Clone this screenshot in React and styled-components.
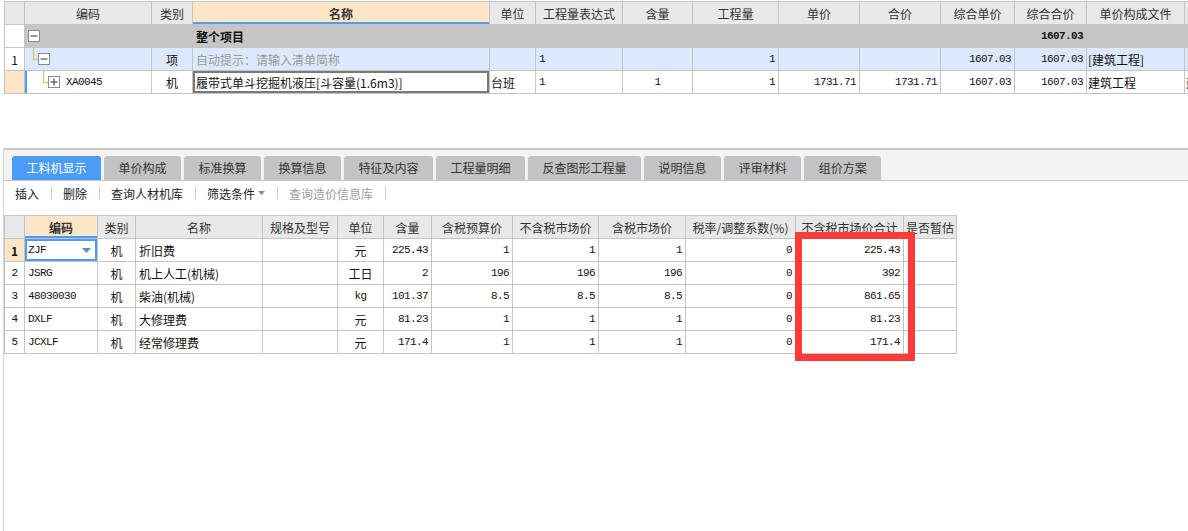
import React from "react";
import styled, { createGlobalStyle } from "styled-components";

const GlobalStyle = createGlobalStyle`
  html, body { margin: 0; padding: 0; background: #ffffff; }
  body {
    font-family: "Noto Sans CJK SC", "Noto Sans", sans-serif;
    font-size: 12px;
    color: #111;
  }
  * { box-sizing: border-box; }
`;

const LINE = "#c4c4c4";
const BLUE = "#4a9cf7";
const PEACH = "#fde6c8";

const Page = styled.div`
  position: relative;
  width: 1188px;
  height: 531px;
  overflow: hidden;
  background: #fff;
`;

/* ---------- upper grid ---------- */
const TopPanel = styled.div`
  height: 148px;
  padding: 1px 0 0 4px;
  overflow: hidden;
`;

const Grid = styled.div`
  display: flex;
  flex-direction: column;
  width: max-content;
  border-top: 1px solid ${LINE};
  border-left: 1px solid ${LINE};
`;

const Row = styled.div`
  display: grid;
  grid-template-columns: ${(p) => p.$cols};
  height: 23px;
  background: ${(p) => p.$bg || "#fff"};
`;

const Cell = styled.div`
  position: relative;
  display: flex;
  align-items: center;
  justify-content: ${(p) =>
    p.$align === "right" ? "flex-end" : p.$align === "center" ? "center" : "flex-start"};
  padding: ${(p) => (p.$tight ? "0 1px" : "0 3px")};
  border-right: 1px solid ${LINE};
  border-bottom: 1px solid ${LINE};
  background: ${(p) => p.$bg || "transparent"};
  color: ${(p) => p.$muted ? "#9a9a9a" : "#111"};
  font-weight: ${(p) => (p.$bold ? 700 : 400)};
  white-space: nowrap;
  overflow: hidden;
  ${(p) =>
    p.$mono &&
    `font-family: "Liberation Mono", "Noto Sans CJK SC", monospace;
     font-size: 11px;
     letter-spacing: -0.6px;`}
  ${(p) => p.$marker && `box-shadow: inset 2px 0 0 ${BLUE};`}
  ${(p) => p.$editing && `box-shadow: inset 0 0 0 2px #7a7a7a;`}
  ${(p) => p.$selected && `box-shadow: inset 0 0 0 2px ${BLUE};`}
`;

const Head = styled.div`
  display: flex;
  align-items: center;
  justify-content: center;
  border-right: 1px solid ${LINE};
  border-bottom: 1px solid ${LINE};
  background: ${(p) => (p.$active ? PEACH : "#e8e8e8")};
  color: #333;
  font-weight: ${(p) => (p.$active ? 700 : 400)};
  white-space: nowrap;
  overflow: hidden;
  ${(p) => p.$active && `box-shadow: inset 0 -2px 0 ${BLUE};`}
`;

const Toggle = styled.span`
  flex: none;
  width: 12px;
  height: 12px;
  margin-left: ${(p) => p.$indent || 0}px;
  border: 1px solid #8c8c8c;
  background: #fff;
  display: flex;
  align-items: center;
  justify-content: center;
`;

const Connector = styled.span`
  flex: none;
  align-self: flex-start;
  width: 5px;
  height: 12px;
  margin-left: ${(p) => p.$indent}px;
  border-left: 1px solid #f3b25a;
  border-bottom: 1px solid #f3b25a;
`;

const Code = styled.span`
  margin-left: 6px;
  font-family: "Liberation Mono", monospace;
  font-size: 11px;
  letter-spacing: -0.6px;
`;

function ToggleBox({ open, indent }) {
  return (
    <Toggle $indent={indent}>
      <svg width="10" height="10" viewBox="0 0 10 10">
        <line x1="1.5" y1="5" x2="8.5" y2="5" stroke="#333" strokeWidth="1" />
        {!open && <line x1="5" y1="1.5" x2="5" y2="8.5" stroke="#333" strokeWidth="1" />}
      </svg>
    </Toggle>
  );
}

const topCols = [20, 127, 41, 297, 46, 87, 70, 86, 81, 81, 74, 72, 98, 80]
  .map((w) => `${w}px`)
  .join(" ");

const topHeads = [
  "", "编码", "类别", "名称", "单位", "工程量表达式", "含量", "工程量",
  "单价", "合价", "综合单价", "综合合价", "单价构成文件", "",
];

/* ---------- lower panel ---------- */
const BottomPanel = styled.div`
  margin-left: 3px;
  height: 383px;
  border-left: 1px solid #d6d6d6;
  border-top: 2px solid #c6c6c6;
`;

const TabBar = styled.div`
  display: flex;
  align-items: flex-end;
  gap: 3px;
  height: 31px;
  padding: 6px 0 0 8px;
  background: #f3f3f3;
  border-bottom: 1px solid #c8c8c8;
`;

const Tab = styled.div`
  height: 24px;
  line-height: 24px;
  padding: 0 14.5px;
  border-radius: 3px 3px 0 0;
  background: ${(p) => (p.$active ? BLUE : "#c3c3c3")};
  color: ${(p) => (p.$active ? "#fff" : "#333")};
  font-size: 12px;
  white-space: nowrap;
`;

const Toolbar = styled.div`
  display: flex;
  align-items: center;
  height: 24px;
  padding-left: 11px;
`;

const ToolItem = styled.span`
  display: flex;
  align-items: center;
  gap: 3px;
  color: ${(p) => (p.$disabled ? "#9d9d9d" : "#222")};
`;

const Sep = styled.span`
  width: 1px;
  height: 14px;
  margin: 0 11px 0 12px;
  background: #d0d0d0;
`;

const LowerGridWrap = styled.div`
  margin-top: 10px;
`;

const Caret = styled.svg`
  position: absolute;
  right: 6px;
  top: 9px;
`;

const Highlight = styled.div`
  position: absolute;
  left: 795px;
  top: 232px;
  width: 120px;
  height: 129px;
  border: 7px solid #fe3b3b;
  pointer-events: none;
`;

const lowCols = [20, 73, 38, 127, 75, 46, 48, 81, 86, 87, 110, 108, 53]
  .map((w) => `${w}px`)
  .join(" ");

const lowHeads = [
  "", "编码", "类别", "名称", "规格及型号", "单位", "含量", "含税预算价",
  "不含税市场价", "含税市场价", "税率/调整系数(%)", "不含税市场价合计", "是否暂估",
];

const items = [
  { n: "1", code: "ZJF", name: "折旧费", unit: "元", qty: "225.43", a: "1", b: "1", c: "1", total: "225.43" },
  { n: "2", code: "JSRG", name: "机上人工(机械)", unit: "工日", qty: "2", a: "196", b: "196", c: "196", total: "392" },
  { n: "3", code: "48030030", name: "柴油(机械)", unit: "kg", qty: "101.37", a: "8.5", b: "8.5", c: "8.5", total: "861.65" },
  { n: "4", code: "DXLF", name: "大修理费", unit: "元", qty: "81.23", a: "1", b: "1", c: "1", total: "81.23" },
  { n: "5", code: "JCXLF", name: "经常修理费", unit: "元", qty: "171.4", a: "1", b: "1", c: "1", total: "171.4" },
];

const tabs = [
  "工料机显示", "单价构成", "标准换算", "换算信息", "特征及内容",
  "工程量明细", "反查图形工程量", "说明信息", "评审材料", "组价方案",
];

export default function App() {
  return (
    <Page>
      <GlobalStyle />
      <TopPanel>
        <Grid>
          <Row $cols={topCols}>
            {topHeads.map((h, i) => (
              <Head key={i} $active={h === "名称"}>{h}</Head>
            ))}
          </Row>

          <Row $cols={topCols} $bg="#c6c6c6">
            <Cell $bg="#fff" />
            <Cell $tight>
              <ToggleBox open indent={2} />
            </Cell>
            <Cell />
            <Cell $bold>整个项目</Cell>
            <Cell />
            <Cell />
            <Cell />
            <Cell />
            <Cell />
            <Cell />
            <Cell />
            <Cell $mono $bold $align="right">1607.03</Cell>
            <Cell />
            <Cell />
          </Row>

          <Row $cols={topCols} $bg="#dce8fb">
            <Cell $bg="#fff" $align="center">1</Cell>
            <Cell $tight>
              <Connector $indent={7} />
              <ToggleBox open />
            </Cell>
            <Cell $align="center">项</Cell>
            <Cell $muted>自动提示：请输入清单简称</Cell>
            <Cell />
            <Cell $mono>1</Cell>
            <Cell />
            <Cell $mono $align="right">1</Cell>
            <Cell />
            <Cell />
            <Cell $mono $align="right">1607.03</Cell>
            <Cell $mono $align="right">1607.03</Cell>
            <Cell $tight>[建筑工程]</Cell>
            <Cell />
          </Row>

          <Row $cols={topCols}>
            <Cell $bg={PEACH} />
            <Cell $tight $marker>
              <Connector $indent={17} />
              <ToggleBox />
              <Code>XA0045</Code>
            </Cell>
            <Cell $align="center">机</Cell>
            <Cell $editing>履带式单斗挖掘机液压[斗容量(1.6m3)]</Cell>
            <Cell $tight>台班</Cell>
            <Cell $mono>1</Cell>
            <Cell $mono $align="center">1</Cell>
            <Cell $mono $align="right">1</Cell>
            <Cell $mono $align="right">1731.71</Cell>
            <Cell $mono $align="right">1731.71</Cell>
            <Cell $mono $align="right">1607.03</Cell>
            <Cell $mono $align="right">1607.03</Cell>
            <Cell $tight>建筑工程</Cell>
            <Cell $tight>建筑工程</Cell>
          </Row>
        </Grid>
      </TopPanel>

      <BottomPanel>
        <TabBar>
          {tabs.map((t, i) => (
            <Tab key={t} $active={i === 0}>{t}</Tab>
          ))}
        </TabBar>

        <Toolbar>
          <ToolItem>插入</ToolItem>
          <Sep />
          <ToolItem>删除</ToolItem>
          <Sep />
          <ToolItem>查询人材机库</ToolItem>
          <Sep />
          <ToolItem>
            筛选条件
            <svg width="7" height="4" viewBox="0 0 7 4">
              <polygon points="0,0 7,0 3.5,4" fill="#8a8a8a" />
            </svg>
          </ToolItem>
          <Sep />
          <ToolItem $disabled>查询造价信息库</ToolItem>
          <Sep />
        </Toolbar>

        <LowerGridWrap>
          <Grid>
            <Row $cols={lowCols}>
              {lowHeads.map((h, i) => (
                <Head key={i} $active={h === "编码"}>{h}</Head>
              ))}
            </Row>
            {items.map((it, i) => (
              <Row key={it.n} $cols={lowCols}>
                <Cell
                  $align="center"
                  $bg={i === 0 ? PEACH : "#fff"}
                  $bold={i === 0}
                  $mono={i !== 0}
                >
                  {it.n}
                </Cell>
                <Cell $mono $selected={i === 0}>
                  {it.code}
                  {i === 0 && (
                    <Caret width="9" height="5" viewBox="0 0 9 5">
                      <polygon points="0,0 9,0 4.5,5" fill="#5a8fc8" />
                    </Caret>
                  )}
                </Cell>
                <Cell $align="center">机</Cell>
                <Cell>{it.name}</Cell>
                <Cell />
                <Cell $align="center" $mono={it.unit === "kg"}>{it.unit}</Cell>
                <Cell $mono $align="right">{it.qty}</Cell>
                <Cell $mono $align="right">{it.a}</Cell>
                <Cell $mono $align="right">{it.b}</Cell>
                <Cell $mono $align="right">{it.c}</Cell>
                <Cell $mono $align="right">0</Cell>
                <Cell $mono $align="right">{it.total}</Cell>
                <Cell />
              </Row>
            ))}
          </Grid>
        </LowerGridWrap>
      </BottomPanel>

      <Highlight />
    </Page>
  );
}
